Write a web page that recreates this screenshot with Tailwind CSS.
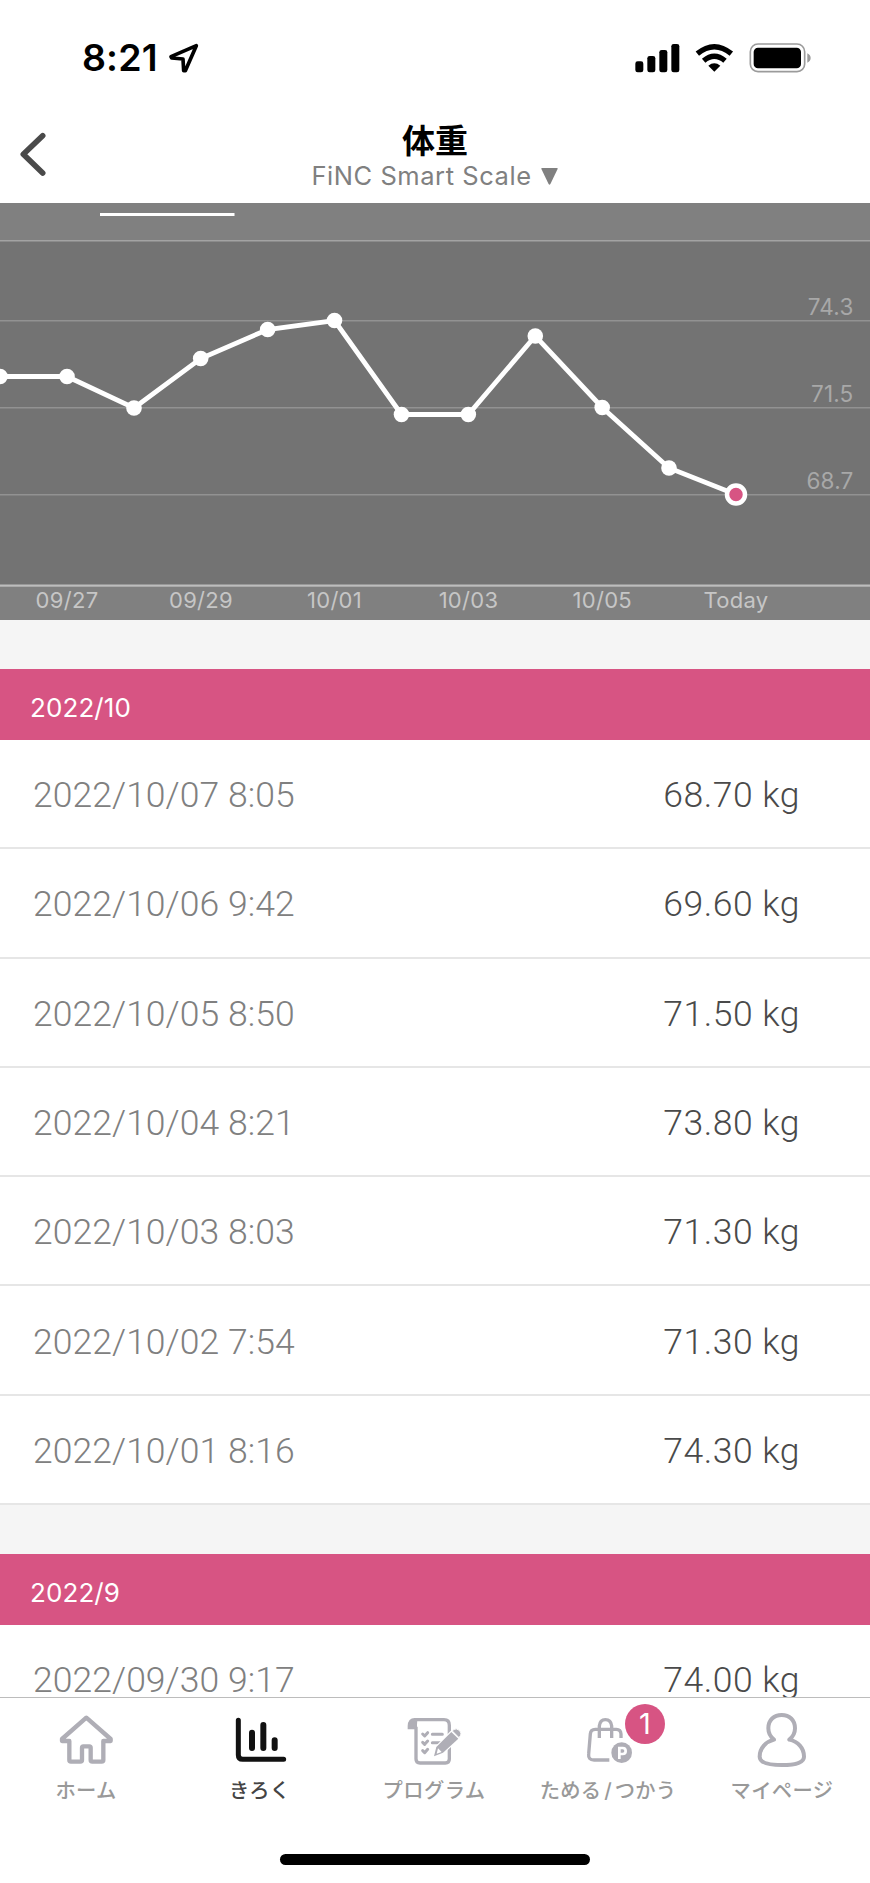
<!DOCTYPE html>
<html lang="ja">
<head>
    <meta charset="UTF-8">
    <meta name="viewport" content="width=device-width, initial-scale=1.0">
    <title>体重</title>
    <script src="https://cdn.jsdelivr.net/npm/@tailwindcss/browser@4"></script>
</head>
<body class="bg-white font-['Inter','Noto_Sans_CJK_JP',sans-serif]">
    <div class="flex h-[1883px] w-[870px] flex-col overflow-hidden">
        <!-- Status bar -->
        <div class="flex h-[115px] shrink-0 items-center justify-between pr-[58px] pl-[82px]">
            <div class="flex items-center gap-[10px] pt-px">
                <span class="text-[37.5px] leading-none font-semibold tracking-[0.1px]">8:21</span>
                <svg class="h-[32px] w-[32px]" viewBox="504 126 96 96" fill="none" stroke="#000" stroke-width="11" stroke-linejoin="round">
                    <path d="M589 137 L513 170 L515 174 L549 177 L551 212 L556 212 Z" />
                </svg>
            </div>
            <svg class="h-[30px] w-[177px]" viewBox="602 128 531 90">
                <rect x="603" y="183" width="24" height="33" rx="7" />
                <rect x="639" y="167" width="24" height="49" rx="7" />
                <rect x="675" y="149" width="24" height="67" rx="7" />
                <rect x="711" y="131" width="24" height="85" rx="7" />
                <g fill="none" stroke="#000" stroke-width="16">
                    <path d="M789 160 Q840 118 891 160" />
                    <path d="M808 181 Q840 154 872 181" />
                </g>
                <path d="M822 196 Q840 182 858 196 L840 214 Z" />
                <rect x="948" y="131" width="163" height="83" rx="23" fill="none" stroke="#9b9b9b" stroke-width="5" />
                <rect x="958" y="142" width="142" height="62" rx="13" />
                <path d="M1119 159 Q1129 164 1129 173 Q1129 182 1119 187 Z" fill="#9b9b9b" />
            </svg>
        </div>

        <!-- Header -->
        <div class="grid h-[88px] shrink-0 grid-cols-[100px_1fr_100px]">
            <svg class="mt-[16px] ml-[18px] h-[46px] w-[32px]" viewBox="54 392 96 138" fill="none" stroke="#4a4a4a" stroke-width="17" stroke-linecap="round" stroke-linejoin="round">
                <path d="M128 406 L70 462 L128 518" />
            </svg>
            <div class="flex flex-col items-center pt-[9px]">
                <h1 class="text-[33px] leading-[34px] font-bold">体重</h1>
                <div class="flex items-center gap-[9px] pt-[2px] pr-px text-[#808080]">
                    <span class="text-[25.5px] leading-[32px] tracking-[0.55px]">FiNC Smart Scale</span>
                    <svg class="h-[17px] w-[17px]" viewBox="0 0 17 17" fill="currentColor"><path d="M1 0 H16 Q17 0 16.6 1 L9.4 16 Q8.5 17.4 7.6 16 L0.4 1 Q0 0 1 0 Z" /></svg>
                </div>
            </div>
        </div>

        <!-- Weight chart -->
        <svg class="h-[417px] w-[870px] shrink-0" viewBox="0 0 870 417">
            <rect width="870" height="417" fill="#808080" />
            <rect y="38" width="870" height="344" fill="#737373" />
            <rect x="100" y="10" width="134.5" height="3" fill="#fff" />
            <g fill="#929292">
                <rect y="37" width="870" height="1.5" fill="#a3a3a3" />
                <rect y="117" width="870" height="1.5" />
                <rect y="204" width="870" height="1.5" />
                <rect y="291" width="870" height="1.5" />
                <rect y="381.5" width="870" height="2.2" fill="#bdbdbd" />
            </g>
            <g class="text-[22.5px] tracking-[0.2px]" fill="#a8a8a8" text-anchor="end">
                <text x="853.5" y="112">74.3</text>
                <text x="853.5" y="199">71.5</text>
                <text x="853.5" y="286">68.7</text>
            </g>
            <g class="text-[22px] tracking-[0.3px]" fill="#c6c6c6" text-anchor="middle">
                <text x="67" y="405">09/27</text>
                <text x="201" y="405">09/29</text>
                <text x="334.5" y="405">10/01</text>
                <text x="468.5" y="405">10/03</text>
                <text x="602.3" y="405">10/05</text>
                <text x="736" y="405">Today</text>
            </g>
            <polyline fill="none" stroke="#fff" stroke-width="4.8" points="0,173.5 67,173.5 134,205 200.7,155.5 267.7,126.5 334.5,117.5 401.5,211.5 468.3,211.5 535.3,133 602.2,204.5 669,265 736,291.5" />
            <g fill="#fff">
                <circle cx="0" cy="173.5" r="7.8" />
                <circle cx="67" cy="173.5" r="7.8" />
                <circle cx="134" cy="205" r="7.8" />
                <circle cx="200.7" cy="155.5" r="7.8" />
                <circle cx="267.7" cy="126.5" r="7.8" />
                <circle cx="334.5" cy="117.5" r="7.8" />
                <circle cx="401.5" cy="211.5" r="7.8" />
                <circle cx="468.3" cy="211.5" r="7.8" />
                <circle cx="535.3" cy="133" r="7.8" />
                <circle cx="602.2" cy="204.5" r="7.8" />
                <circle cx="669" cy="265" r="7.8" />
            </g>
            <circle cx="736" cy="291.5" r="9" fill="#d75483" stroke="#fff" stroke-width="4.5" />
        </svg>

        <!-- Records, filled in by the script below -->
        <main id="records" class="h-[1077px] shrink-0 overflow-hidden bg-[#f5f5f5]"></main>

        <!-- Tab bar -->
        <nav class="flex h-[186px] shrink-0 flex-col border-t border-[#bcbcbc] bg-white">
            <div class="grid grid-cols-5 pt-[12px] text-[20.3px] leading-[30px] font-medium text-[#999]">
                <a class="flex flex-col items-center gap-[6px]">
                    <svg class="h-[60px] w-[60px]" viewBox="171 60 180 180" fill="none" stroke="#afaeb6" stroke-width="13" stroke-linejoin="round">
                        <path d="M259 83 L186 147 V153 H208 V210 Q208 215 213 215 H241 Q246 215 246 210 V173 Q246 169 250 169 H268 Q272 169 272 173 V210 Q272 215 277 215 H305 Q310 215 310 210 V153 H332 V147 Z" />
                    </svg>
                    <span class="pr-[2px] tracking-[0.3px]">ホーム</span>
                </a>
                <a class="flex flex-col items-center gap-[6px] text-[#444]">
                    <svg class="h-[60px] w-[60px]" viewBox="693 60 180 180" fill="none" stroke="#111" stroke-linecap="round">
                        <path stroke-width="15" d="M715 91 V195 Q715 208 728 208 H851" />
                        <path stroke-width="18" d="M756 128 V174 M790 105 V174 M824 151 V174" />
                    </svg>
                    <span class="pr-[3px]">きろく</span>
                </a>
                <a class="flex flex-col items-center gap-[6px]">
                    <svg class="h-[60px] w-[60px]" viewBox="345 60 180 180" fill="none" stroke="#afaeb6">
                        <path stroke-width="10" d="M372 89 H462 Q478 89 478 106 V207 Q478 219 466 219 H390 Q378 219 378 207 V110" />
                        <path fill="#afaeb6" stroke="none" d="M353 118 V108 Q354 84 374 84 H384 Q381 91 381 105 V118 Z" />
                        <path stroke-width="9" stroke-linecap="round" stroke-linejoin="round" d="M427 133 H457 M427 158 H452 M398 132 L404 138 L413 128 M398 157 L404 163 L413 153 M398 182 L404 188 L413 178" />
                        <path fill="#afaeb6" stroke="#fff" stroke-width="7" paint-order="stroke" d="M432 199 L439 171 L484 126 L505 146 L459 188 Z" />
                        <path fill="#afaeb6" stroke="#fff" stroke-width="3" d="M487 123 L492 118 Q499 114 508 121 Q516 130 512 136 L507 143 Z" />
                        <path fill="#fff" stroke="none" d="M440 191 L444 175 L455 186 Z" />
                    </svg>
                    <span class="pr-[2px] tracking-[0.4px]">プログラム</span>
                </a>
                <a class="relative flex flex-col items-center gap-[6px]">
                    <svg class="h-[60px] w-[60px]" viewBox="27 60 180 180" fill="none" stroke="#afaeb6">
                        <path stroke-width="10" d="M118 210 H72 Q54 210 56 192 L61 132 Q62 118 76 118 H139 Q152 118 153 132 V144" />
                        <path stroke-width="10" d="M88 144 V108 Q90 89 106 89 Q123 89 125 108 V144" />
                        <circle cx="155" cy="188" r="31" fill="#afaeb6" stroke="none" />
                        <path stroke="#fff" stroke-width="8" d="M148 207 V174 H158 Q167 174 167 183 Q167 192 158 192 H148" />
                    </svg>
                    <span class="pr-[2px] tracking-[0.2px]">ためる<span class="px-[3px]">/</span>つかう</span>
                    <span class="absolute top-[-6px] left-[103px] flex h-[40px] w-[40px] items-center justify-center rounded-full bg-[#d75483] text-[29px] font-normal text-white">1</span>
                </a>
                <a class="flex flex-col items-center gap-[6px]">
                    <svg class="h-[60px] w-[60px]" viewBox="549 60 180 180" fill="none" stroke="#afaeb6" stroke-width="12" stroke-linejoin="round">
                        <path d="M612 149 C598 138 595 129 595 115 C595 90 612 75 635 75 C658 75 675 90 675 115 C675 129 672 138 658 149 C684 155 702 174 702 200 C702 218 672 225 635 225 C598 225 569 218 569 200 C569 174 588 155 612 149 Z" />
                    </svg>
                    <span class="pr-[2px] tracking-[0.4px]">マイページ</span>
                </a>
            </div>
            <div class="mt-auto mb-[18px] h-[11px] w-[310px] self-center rounded-full bg-black"></div>
        </nav>
    </div>

    <script>
        const months = [
            {
                title: '2022/10',
                records: [
                    ['2022/10/07 8:05', '68.70'],
                    ['2022/10/06 9:42', '69.60'],
                    ['2022/10/05 8:50', '71.50'],
                    ['2022/10/04 8:21', '73.80'],
                    ['2022/10/03 8:03', '71.30'],
                    ['2022/10/02 7:54', '71.30'],
                    ['2022/10/01 8:16', '74.30']
                ]
            },
            {
                title: '2022/9',
                records: [['2022/09/30 9:17', '74.00']]
            }
        ];

        function renderRecord([date, weight]) {
            return `
                <li class="flex h-[109.3px] items-center justify-between border-b-2 border-[#e6e6e6] bg-white pt-[4px] pr-[70px] pl-[33px] font-['Roboto',sans-serif] text-[35.5px] font-light">
                    <span class="tracking-[0.05px] text-[#808080]">${date}</span>
                    <span class="tracking-[0.5px] text-[#4a4a4a]">${weight} kg</span>
                </li>
            `;
        }

        document.getElementById('records').innerHTML = months.map((month) => `
            <section class="pt-[49px]">
                <h2 class="flex h-[71px] items-center bg-[#d75483] pt-[5px] pl-[30px] text-[26px] tracking-[0.1px] text-white">${month.title}</h2>
                <ul>${month.records.map(renderRecord).join('')}</ul>
            </section>
        `).join('');
    </script>
</body>
</html>
